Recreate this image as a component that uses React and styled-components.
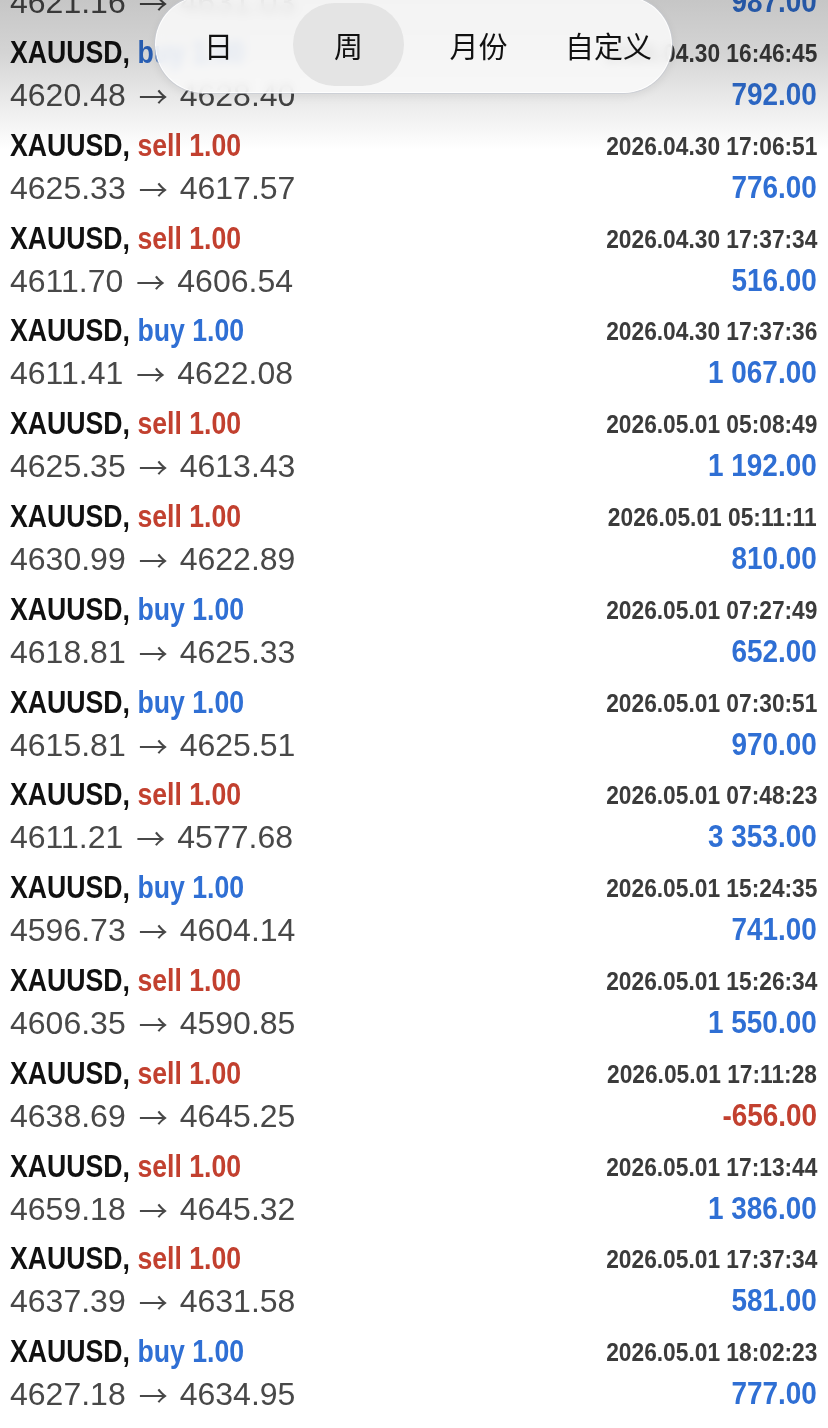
import React from 'react';
import styled, { createGlobalStyle } from 'styled-components';

const GlobalStyle = createGlobalStyle`
  html, body {
    margin: 0;
    padding: 0;
    background: #fff;
  }
  body {
    font-family: "Liberation Sans", Arial, sans-serif;
    overflow: hidden;
  }
`;

const Screen = styled.div`
  position: relative;
  width: 828px;
  height: 1428px;
  overflow: hidden;
  background: #fff;
`;

const List = styled.div`
  margin-top: -70.8px;
  display: flex;
  flex-direction: column;
`;

const Row = styled.div`
  box-sizing: border-box;
  height: 92.8px;
  padding: 9px 11px 0 10px;
  display: grid;
  grid-template-rows: 44px 40px;
`;

const Line = styled.div`
  display: flex;
  align-items: center;
  justify-content: space-between;
  white-space: nowrap;
`;

// the app uses a condensed bold face, squeeze the bold texts a bit
const Title = styled.span`
  display: inline-block;
  font-size: 31px;
  line-height: 44px;
  font-weight: 700;
  color: #111;
  transform: scaleX(0.86);
  transform-origin: left center;
`;

const Side = styled.span`
  color: ${(p) => (p.$sell ? '#c2402f' : '#2f6fd4')};
`;

const Time = styled.span`
  display: inline-block;
  font-size: 26px;
  line-height: 44px;
  font-weight: 700;
  color: #3b3b3b;
  transform: scaleX(0.875);
  transform-origin: right center;
`;

const Prices = styled.span`
  display: flex;
  align-items: center;
  font-size: 32px;
  line-height: 40px;
  color: #484848;
`;

const Arrow = styled.span`
  font-family: "Noto Sans CJK SC", sans-serif;
  font-size: 29px;
  line-height: 40px;
  margin: 0 12px 0 13px;
  color: #484848;
`;

const Profit = styled.span`
  display: inline-block;
  font-size: 31px;
  line-height: 40px;
  font-weight: 700;
  color: ${(p) => (p.$loss ? '#c2402f' : '#2f6fd4')};
  transform: scaleX(0.9);
  transform-origin: right center;
`;

const TopShade = styled.div`
  position: absolute;
  left: 0;
  top: 0;
  width: 100%;
  height: 150px;
  pointer-events: none;
  mix-blend-mode: multiply;
  background: linear-gradient(
    to bottom,
    rgba(198, 198, 198, 1) 0%,
    rgba(212, 212, 212, 1) 35%,
    rgba(236, 236, 236, 1) 70%,
    rgba(255, 255, 255, 1) 100%
  );
`;

const Pill = styled.div`
  position: absolute;
  left: 155px;
  top: -4px;
  width: 517px;
  height: 97px;
  box-sizing: border-box;
  border-radius: 49px;
  background: rgba(249, 249, 249, 0.88);
  backdrop-filter: blur(5px);
  border: 1.5px solid rgba(255, 255, 255, 0.95);
  box-shadow: 0 0 0 1px rgba(196, 202, 210, 0.65), 0 3px 10px rgba(0, 0, 0, 0.08);
  display: flex;
  align-items: center;
  justify-content: center;
  gap: 19px;
`;

const Segment = styled.div`
  width: 111px;
  height: 83px;
  border-radius: 42px;
  display: flex;
  align-items: center;
  justify-content: center;
  font-family: "Noto Sans CJK SC", "Noto Sans", sans-serif;
  font-size: 29px;
  color: #111;
  background: ${(p) => (p.$active ? '#e4e4e4' : 'transparent')};
`;

const trades = [
  ['buy', '2026.04.30 16:25:12', '4621.16', '4631.03', '987.00'],
  ['buy', '2026.04.30 16:46:45', '4620.48', '4628.40', '792.00'],
  ['sell', '2026.04.30 17:06:51', '4625.33', '4617.57', '776.00'],
  ['sell', '2026.04.30 17:37:34', '4611.70', '4606.54', '516.00'],
  ['buy', '2026.04.30 17:37:36', '4611.41', '4622.08', '1 067.00'],
  ['sell', '2026.05.01 05:08:49', '4625.35', '4613.43', '1 192.00'],
  ['sell', '2026.05.01 05:11:11', '4630.99', '4622.89', '810.00'],
  ['buy', '2026.05.01 07:27:49', '4618.81', '4625.33', '652.00'],
  ['buy', '2026.05.01 07:30:51', '4615.81', '4625.51', '970.00'],
  ['sell', '2026.05.01 07:48:23', '4611.21', '4577.68', '3 353.00'],
  ['buy', '2026.05.01 15:24:35', '4596.73', '4604.14', '741.00'],
  ['sell', '2026.05.01 15:26:34', '4606.35', '4590.85', '1 550.00'],
  ['sell', '2026.05.01 17:11:28', '4638.69', '4645.25', '-656.00'],
  ['sell', '2026.05.01 17:13:44', '4659.18', '4645.32', '1 386.00'],
  ['sell', '2026.05.01 17:37:34', '4637.39', '4631.58', '581.00'],
  ['buy', '2026.05.01 18:02:23', '4627.18', '4634.95', '777.00'],
];

const periods = ['日', '周', '月份', '自定义'];

export default function App() {
  return (
    <Screen>
      <GlobalStyle />
      <List>
        {trades.map(([side, time, open, close, profit], i) => (
          <Row key={i}>
            <Line>
              <Title>
                XAUUSD, <Side $sell={side === 'sell'}>{side} 1.00</Side>
              </Title>
              <Time>{time}</Time>
            </Line>
            <Line>
              <Prices>
                {open}
                <Arrow>→</Arrow>
                {close}
              </Prices>
              <Profit $loss={profit.startsWith('-')}>{profit}</Profit>
            </Line>
          </Row>
        ))}
      </List>
      <TopShade />
      <Pill>
        {periods.map((p) => (
          <Segment key={p} $active={p === '周'}>
            {p}
          </Segment>
        ))}
      </Pill>
    </Screen>
  );
}
